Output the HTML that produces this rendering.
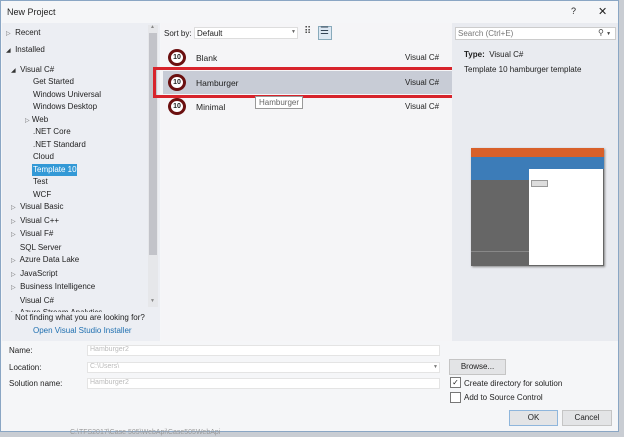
<!DOCTYPE html><html><head><style>
body{margin:0;width:624px;height:437px;overflow:hidden;background:#c9cdd3;font-family:"Liberation Sans",sans-serif;font-size:8px;color:#1e1e1e;position:relative}
div,span{position:absolute;box-sizing:border-box}
.t{white-space:nowrap}
</style></head><body>
<div style="left:0;top:0;width:619px;height:432px;background:#f5f6f8;border:1px solid #8aa6c4"></div>
<div class="t" style="left:7px;top:7px;font-size:9px">New Project</div>
<div class="t" style="left:571px;top:6px;font-size:9px">?</div>
<div class="t" style="left:598px;top:5px;font-size:11px">✕</div>
<!-- left panel -->
<div style="left:2px;top:23px;width:158px;height:318px;background:#eceef3"></div>
<div style="left:148px;top:25px;width:10px;height:282px;background:#e6e7ea"></div>
<div style="left:149px;top:33px;width:8px;height:222px;background:#c2c3c9"></div>
<div class="t" style="left:150px;top:24px;font-size:5px;color:#888">▲</div>
<div class="t" style="left:150px;top:298px;font-size:5px;color:#888">▼</div>
<div style="left:0;top:0;width:148px;height:312px;overflow:hidden;line-height:12.5px">
<div class="t" style="left:6px;top:27px"><span style="position:static;font-size:6px;color:#666">▷</span>&nbsp; Recent</div>
<div class="t" style="left:6px;top:44px"><span style="position:static;font-size:6px;color:#333">◢</span>&nbsp; Installed</div>
<div class="t" style="left:11px;top:64px"><span style="position:static;font-size:6px;color:#333">◢</span>&nbsp; Visual C#</div>
<div class="t" style="left:33px;top:76px">Get Started<br>Windows Universal<br>Windows Desktop</div>
<div class="t" style="left:25px;top:113.5px"><span style="position:static;font-size:6px;color:#666">▷</span> Web</div>
<div class="t" style="left:33px;top:126px">.NET Core<br>.NET Standard<br>Cloud</div>
<div style="left:32px;top:164px;width:45px;height:12px;background:#3399d6"></div>
<div class="t" style="left:33px;top:163.5px;color:#fff">Template 10</div>
<div class="t" style="left:33px;top:176px">Test<br>WCF</div>
<div class="t" style="left:11px;top:201px;line-height:12.5px"><span style="position:static;font-size:6px;color:#666">▷</span>&nbsp; Visual Basic<br><span style="position:static;font-size:6px;color:#666">▷</span>&nbsp; Visual C++<br><span style="position:static;font-size:6px;color:#666">▷</span>&nbsp; Visual F#<br>&nbsp;&nbsp;&nbsp; SQL Server<br><span style="position:static;font-size:6px;color:#666">▷</span>&nbsp; Azure Data Lake<br><span style="position:static;font-size:6px;color:#666">▷</span>&nbsp; JavaScript<br><span style="position:static;font-size:6px;color:#666">▷</span>&nbsp; Business Intelligence<br>&nbsp;&nbsp;&nbsp; Visual C#<br><span style="position:static;font-size:6px;color:#666">▷</span>&nbsp; Azure Stream Analytics</div>
</div>
<div class="t" style="left:15px;top:313px">Not finding what you are looking for?</div>
<div class="t" style="left:33px;top:326px;color:#1e6fb0">Open Visual Studio Installer</div>
<!-- middle -->
<div style="left:161px;top:23px;width:291px;height:318px;background:#f5f5f7"></div>
<div class="t" style="left:164px;top:29px">Sort by:</div>
<div style="left:194px;top:27px;width:104px;height:12px;background:#fff;border:1px solid #ddd"></div>
<div class="t" style="left:197px;top:29px">Default</div>
<div class="t" style="left:291px;top:29px;font-size:5px;color:#666">▼</div>
<div class="t" style="left:304px;top:26px;font-size:10px;color:#444">⠿</div>
<div style="left:318px;top:26px;width:14px;height:14px;border:1px solid #8ab;background:#dde8f3"></div>
<div class="t" style="left:320px;top:26px;font-size:10px;color:#345">☰</div>
<div style="left:153px;top:67px;width:305px;height:31px;border:3px solid #d7232b"></div>
<div style="left:163px;top:71px;width:292px;height:23px;background:#c8ccd6"></div>
<div class="t" style="left:196px;top:53px;font-size:8.5px">Blank</div>
<div class="t" style="left:196px;top:78px;font-size:8.5px">Hamburger</div>
<div class="t" style="left:196px;top:102px;font-size:8.5px">Minimal</div>
<div class="t" style="left:405px;top:53px">Visual C#</div>
<div class="t" style="left:405px;top:78px">Visual C#</div>
<div class="t" style="left:405px;top:102px">Visual C#</div>
<div style="left:168px;top:49px;width:18px;height:17px;border-radius:50%;border:3px solid #6b1010;background:#fff;font-size:7px;font-weight:bold;text-align:center;line-height:11px">10</div>
<div style="left:168px;top:74px;width:18px;height:17px;border-radius:50%;border:3px solid #6b1010;background:#fff;font-size:7px;font-weight:bold;text-align:center;line-height:11px">10</div>
<div style="left:168px;top:98px;width:18px;height:17px;border-radius:50%;border:3px solid #6b1010;background:#fff;font-size:7px;font-weight:bold;text-align:center;line-height:11px">10</div>
<div class="t" style="left:255px;top:96px;height:13px;padding:1px 3px;background:#fff;border:1px solid #999;color:#666">Hamburger</div>
<!-- right -->
<div style="left:452px;top:23px;width:166px;height:318px;background:#e9ebf0"></div>
<div style="left:455px;top:27px;width:161px;height:13px;background:#fff;border:1px solid #ccc"></div>
<div class="t" style="left:458px;top:29px;color:#777">Search (Ctrl+E)</div>
<div class="t" style="left:598px;top:28px;color:#444">⚲ <span style="position:static;font-size:5px">▼</span></div>
<div class="t" style="left:464px;top:50px"><b>Type:</b>&nbsp; Visual C#</div>
<div class="t" style="left:464px;top:65px">Template 10 hamburger template</div>
<div style="left:471px;top:148px;width:133px;height:118px;background:#666;box-shadow:1px 1px 2px #888"></div>
<div style="left:471px;top:148px;width:133px;height:9px;background:#d8602a"></div>
<div style="left:471px;top:157px;width:133px;height:12px;background:#3c7cb8"></div>
<div style="left:471px;top:169px;width:58px;height:11px;background:#3c7cb8"></div>
<div style="left:529px;top:169px;width:74px;height:96px;background:#fff"></div>
<div style="left:531px;top:180px;width:17px;height:7px;background:#ddd;border:1px solid #999"></div>
<div style="left:471px;top:251px;width:58px;height:1px;background:#888"></div>
<!-- bottom -->
<div class="t" style="left:9px;top:346px">Name:</div>
<div class="t" style="left:9px;top:363px">Location:</div>
<div class="t" style="left:9px;top:379px">Solution name:</div>
<div style="left:87px;top:345px;width:353px;height:11px;background:#fff;border:1px solid #e4e4e4"></div>
<div style="left:87px;top:362px;width:353px;height:11px;background:#fff;border:1px solid #e4e4e4"></div>
<div style="left:87px;top:378px;width:353px;height:11px;background:#fff;border:1px solid #e4e4e4"></div>
<div class="t" style="left:90px;top:346px;color:#bbb;font-size:7px">Hamburger2</div>
<div class="t" style="left:90px;top:363px;color:#bbb;font-size:7px">C:\Users\</div>
<div class="t" style="left:90px;top:379px;color:#bbb;font-size:7px">Hamburger2</div>
<div class="t" style="left:433px;top:364px;font-size:5px;color:#777">▼</div>
<div style="left:449px;top:359px;width:57px;height:16px;background:#e3e4e6;border:1px solid #c5c5c5;text-align:center;line-height:13px">Browse...</div>
<div style="left:450px;top:377px;width:11px;height:11px;background:#fff;border:1px solid #777;font-size:8px;line-height:9px;text-align:center">✓</div>
<div class="t" style="left:464px;top:379px">Create directory for solution</div>
<div style="left:450px;top:392px;width:11px;height:11px;background:#fff;border:1px solid #777"></div>
<div class="t" style="left:464px;top:393px">Add to Source Control</div>
<div style="left:509px;top:410px;width:49px;height:16px;background:#e3e4e6;border:1px solid #8fb6dc;text-align:center;line-height:14px">OK</div>
<div style="left:562px;top:410px;width:50px;height:16px;background:#e3e4e6;border:1px solid #c5c5c5;text-align:center;line-height:14px">Cancel</div>
<div class="t" style="left:70px;top:429px;color:#999;font-size:7px">C:\TFS2017\Case 505\WebApi\Case505WebApi</div>
</body></html>
